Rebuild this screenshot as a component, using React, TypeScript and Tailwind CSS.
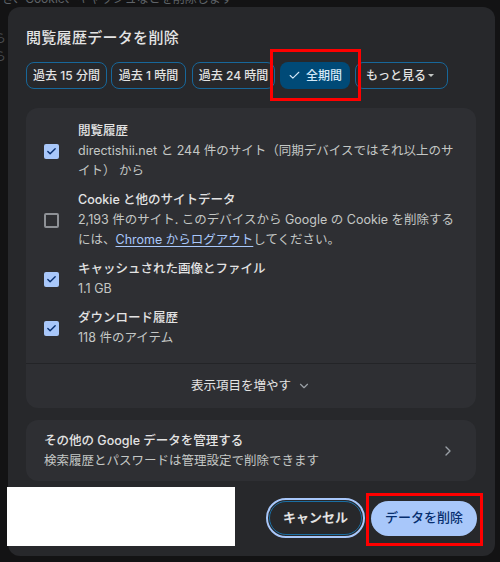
import { Check, ChevronDown, ChevronRight } from 'lucide-react';

const chips = [
  { label: '過去 15 分間', w: 'w-[81px]' },
  { label: '過去 1 時間', w: 'w-[75px]' },
  { label: '過去 24 時間', w: 'w-[83px]' },
];

const items = [
  {
    title: '閲覧履歴',
    desc: (
      <>
        directishii.net と 244 件のサイト（同期デバイスではそれ以上のサイト） から
      </>
    ),
    checked: true,
  },
  {
    title: 'Cookie と他のサイトデータ',
    desc: (
      <>
        2,193 件のサイト. このデバイスから Google の Cookie を削除するには、
        <span className="text-[#a8c7fa] underline underline-offset-2">Chrome からログアウト</span>
        してください。
      </>
    ),
    checked: false,
  },
  { title: 'キャッシュされた画像とファイル', desc: <>1.1 GB</>, checked: true },
  { title: 'ダウンロード履歴', desc: <>118 件のアイテム</>, checked: true },
];

function Checkbox({ checked }: { checked: boolean }) {
  if (checked) {
    return (
      <div className="w-[15px] h-[15px] rounded-[2px] bg-[#a8c7fa] flex items-center justify-center shrink-0">
        <Check className="w-[11px] h-[11px] text-[#062e6f]" strokeWidth={3} />
      </div>
    );
  }
  return <div className="w-[15px] h-[15px] rounded-[2px] border-2 border-[#8e9196] shrink-0" />;
}

export default function App() {
  return (
    <div
      className="relative w-[500px] h-[562px] overflow-hidden bg-[#131314] text-[#e3e3e3]"
      style={{ fontFamily: 'Inter, "Noto Sans CJK JP", sans-serif' }}
    >
      {/* page behind the dialog */}
      <div className="-mt-[9px] pl-[2px] text-[12px] leading-4 text-[#5f6368] whitespace-nowrap">
        き、Cookie、キャッシュなどを削除します
      </div>
      <div className="mt-[24px] flex flex-col gap-[2px] text-[12px] leading-4 text-[#4a4d51] -ml-[6px]">
        <span>ら</span>
        <span>ら</span>
      </div>

      {/* dialog */}
      <div className="absolute left-[8px] top-[7px] w-[487px] h-[549px] rounded-[12px] bg-[#27282b] px-[18px] pt-[21px] flex flex-col">
        <h1 className="text-[15px] leading-5 font-medium tracking-[0.3px]">閲覧履歴データを削除</h1>

        <div className="mt-[14px] flex items-center whitespace-nowrap">
          {chips.map((c, i) => (
            <div
              key={c.label}
              className={`${c.w} ${i === 0 ? '' : i === 1 ? 'ml-[4px]' : 'ml-[6px]'} shrink-0 h-[27px] rounded-[8px] border border-[#17679a] flex items-center justify-center text-[12px] font-medium text-[#e3e3e3]`}
            >
              {c.label}
            </div>
          ))}
          <div className="ml-[5px] w-[70px] shrink-0 h-[27px] rounded-[8px] bg-[#004a77] flex items-center justify-center gap-[5px] text-[12px] font-medium text-[#d3e8f7]">
            <Check className="w-[13px] h-[13px]" strokeWidth={2} />
            全期間
          </div>
          <div className="ml-[5px] w-[93px] shrink-0 h-[27px] pl-[10px] pr-[12px] rounded-[8px] border border-[#17679a] flex items-center justify-between text-[12px] font-medium">
            もっと見る
            <svg width="8" height="5" viewBox="0 0 8 5">
              <path d="M1 1 L4 4 L7 1 Z" fill="#c4c7c5" />
            </svg>
          </div>
        </div>

        {/* data types card */}
        <div className="mt-[19px] w-[450px] rounded-[12px] bg-[#2e2f33] flex flex-col">
          <div className="pt-[13px] pb-[15px] pl-[18px] pr-[14px] flex flex-col gap-[9px]">
            {items.map((it) => (
              <div key={it.title} className="flex items-center gap-[19px]">
                <Checkbox checked={it.checked} />
                <div className="flex flex-col text-[12.5px] leading-5">
                  <span className="font-medium text-[#e3e3e3]">{it.title}</span>
                  <span className="text-[#c4c7c5]">{it.desc}</span>
                </div>
              </div>
            ))}
          </div>
          <div className="h-[1px] bg-[#232427]" />
          <div className="h-[44px] flex items-center justify-center gap-[6px] text-[12.5px] text-[#e3e3e3]">
            表示項目を増やす
            <ChevronDown className="w-[14px] h-[14px] text-[#9aa0a6]" />
          </div>
        </div>

        {/* manage google data */}
        <div className="mt-[12px] w-[450px] h-[61px] rounded-[12px] bg-[#2e2f33] pl-[18px] pr-[20px] flex items-center justify-between">
          <div className="flex flex-col text-[12.5px] leading-5">
            <span className="font-medium text-[#e3e3e3]">その他の Google データを管理する</span>
            <span className="text-[#c4c7c5]">検索履歴とパスワードは管理設定で削除できます</span>
          </div>
          <ChevronRight className="w-[16px] h-[16px] text-[#9aa0a6]" />
        </div>

        {/* actions */}
        <div className="mt-[17px] w-[451px] flex justify-end items-center gap-[6px]">
          <div className="rounded-full border-2 border-[#a8c7fa] p-[1px]">
            <div className="h-[34px] w-[93px] rounded-full border border-[#1a6ea3] flex items-center justify-center text-[13px] font-semibold text-[#e3e3e3]">
              キャンセル
            </div>
          </div>
          <div className="h-[35px] w-[106px] rounded-full bg-[#a8c7fa] flex items-center justify-center text-[13px] font-medium text-[#062e6f]">
            データを削除
          </div>
        </div>
      </div>

      {/* redaction and annotations */}
      <div className="absolute left-[7px] top-[487px] w-[228px] h-[59px] bg-white" />
      <div className="absolute left-[270px] top-[49px] w-[91px] h-[52px] border-[3px] border-[#ff0000]" />
      <div className="absolute left-[366px] top-[493px] w-[117px] h-[53px] border-[3px] border-[#ff0000]" />
    </div>
  );
}
